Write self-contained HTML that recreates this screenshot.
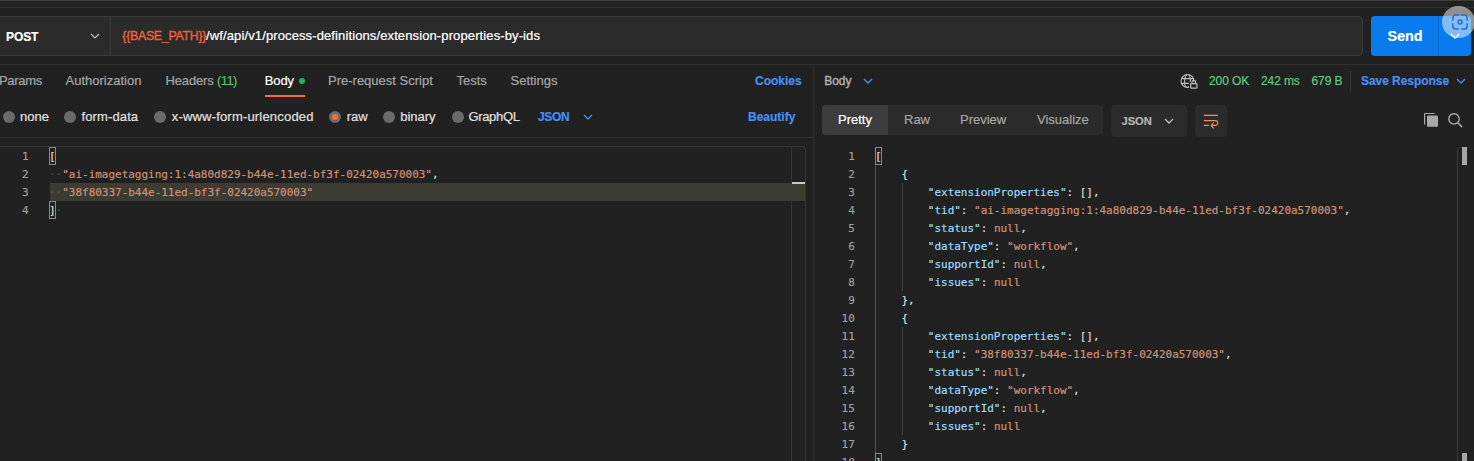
<!DOCTYPE html>
<html><head><meta charset="utf-8">
<style>
*{box-sizing:border-box;margin:0;padding:0}
html,body{width:1474px;height:461px;overflow:hidden;background:#212121;font-family:"Liberation Sans",sans-serif;color:#fff}
.abs{position:absolute}
.t{position:absolute;white-space:nowrap;font-size:13px;line-height:16px;color:#a6a6a6;-webkit-text-stroke:0.2px currentColor}
.hl{position:absolute;left:0;height:1px;background:#303030}
.mono{font-family:"DejaVu Sans Mono","Liberation Mono",monospace;font-size:11px;letter-spacing:-0.02px;-webkit-text-stroke:0.2px currentColor;line-height:18px;white-space:pre;position:absolute}
.ln{position:absolute;font-family:"DejaVu Sans Mono","Liberation Mono",monospace;font-size:11px;line-height:18px;color:#a0a0a0;-webkit-text-stroke:0.15px currentColor;text-align:right;width:30px}
.k{color:#9cdcfe}.s{color:#ce9178}.p{color:#dcdcdc}
.radio{position:absolute;width:12px;height:12px;border-radius:50%;background:#6b6b6b}
</style></head><body>
<div class="abs" style="left:0;top:0;width:1474px;height:1px;background:#3d3d3d"></div>
<div class="hl" style="top:7px;width:1474px"></div>
<!-- URL bar -->
<div class="abs" style="left:-4px;top:16px;width:1367px;height:40px;background:#2b2b2b;border:1px solid #3a3a3a;border-radius:4px"></div>
<div class="abs" style="left:110px;top:17px;width:1px;height:38px;background:#3a3a3a"></div>
<div class="t" style="left:6px;top:28.5px;font-weight:bold;color:#fff;font-size:12px;letter-spacing:-0.1px">POST</div>
<svg class="abs" style="left:89px;top:32px" width="12" height="8" viewBox="0 0 12 8"><path d="M2 2 L6 6 L10 2" fill="none" stroke="#bdbdbd" stroke-width="1.2"/></svg>
<div class="t" style="left:122.3px;top:28px;font-size:13px;color:#fff;letter-spacing:0.115px;-webkit-text-stroke:0.22px #fff"><span style="color:#ec6039;font-size:12.3px;letter-spacing:-0.25px;-webkit-text-stroke:0.4px #ec6039">{{BASE_PATH}}</span>/wf/api/v1/process-definitions/extension-properties-by-ids</div>
<!-- Send -->
<div class="abs" style="left:1371px;top:16px;width:100px;height:40px;background:#097bed;border-radius:4px"></div>
<div class="abs" style="left:1438px;top:16px;width:1px;height:40px;background:#0b6fd8"></div>
<div class="t" style="left:1387.6px;top:27.3px;font-weight:bold;color:#fff;font-size:14.3px;line-height:18px;letter-spacing:-0.05px">Send</div>
<svg class="abs" style="left:1449px;top:32.3px" width="12" height="8" viewBox="0 0 12 8"><path d="M2 2 L6 6 L10 2" fill="none" stroke="#fff" stroke-width="1.4"/></svg>
<!-- floating circle -->
<div class="abs" style="left:1442.4px;top:5.8px;width:32.6px;height:32.6px;border-radius:50%;background:rgba(255,255,255,.5)"></div>
<svg class="abs" style="left:1451.5px;top:14px" width="16" height="16" viewBox="0 0 18 18" fill="none" stroke="#1f6fd1" stroke-width="1.7" stroke-linecap="round"><path d="M1 7V4a3 3 0 0 1 3-3h3M11 1h3a3 3 0 0 1 3 3v3M17 11v3a3 3 0 0 1-3 3h-3M7 17H4a3 3 0 0 1-3-3v-3"/><circle cx="9" cy="9" r="2.3"/></svg>

<div class="hl" style="top:64px;width:1474px"></div>
<!-- vertical divider -->
<div class="abs" style="left:813px;top:65px;width:1px;height:396px;background:#303030"></div>

<!-- request tabs -->
<div class="t" style="left:-1px;top:73px;letter-spacing:-0.3px">Params</div>
<div class="t" style="left:65.5px;top:73px">Authorization</div>
<div class="t" style="left:165.5px;top:73px;letter-spacing:-0.15px">Headers <span style="color:#4fc36d;letter-spacing:-0.6px">(11)</span></div>
<div class="t" style="left:264.7px;top:73px;color:#fff;letter-spacing:-0.1px">Body</div>
<div class="abs" style="left:299px;top:78px;width:6px;height:6px;border-radius:50%;background:#1fb45b"></div>
<div class="abs" style="left:265px;top:95px;width:39.5px;height:2.4px;background:#ff6c37"></div>
<div class="t" style="left:328px;top:73px">Pre-request Script</div>
<div class="t" style="left:456.5px;top:73px">Tests</div>
<div class="t" style="left:510.5px;top:73px">Settings</div>
<div class="t" style="left:755px;top:73.3px;color:#4590ef;font-weight:bold;font-size:12px">Cookies</div>

<!-- radios -->
<div class="radio" style="left:3px;top:111px"></div><div class="t" style="left:20px;top:109px;color:#e0e0e0">none</div>
<div class="radio" style="left:64px;top:111px"></div><div class="t" style="left:81.5px;top:109px;color:#e0e0e0;letter-spacing:0.12px">form-data</div>
<div class="radio" style="left:154px;top:111px"></div><div class="t" style="left:171.7px;top:109px;color:#e0e0e0;letter-spacing:0.19px">x-www-form-urlencoded</div>
<div class="radio" style="left:328.8px;background:#ff6c37;border:3px solid #6b6b6b;width:12.5px;height:12.5px;top:110.7px"></div><div class="t" style="left:346.7px;top:109px;color:#e0e0e0">raw</div>
<div class="radio" style="left:383px;top:111px"></div><div class="t" style="left:400.2px;top:109px;color:#e0e0e0">binary</div>
<div class="radio" style="left:452px;top:111px"></div><div class="t" style="left:468.5px;top:109px;color:#e0e0e0;letter-spacing:-0.35px">GraphQL</div>
<div class="t" style="left:538px;top:109.3px;color:#4590ef;font-weight:bold;font-size:12px;letter-spacing:-0.3px">JSON</div>
<svg class="abs" style="left:582px;top:113px" width="12" height="8" viewBox="0 0 12 8"><path d="M2 2 L6 6 L10 2" fill="none" stroke="#4a90e8" stroke-width="1.3"/></svg>
<div class="t" style="left:748px;top:109.3px;color:#4590ef;font-weight:bold;font-size:12px">Beautify</div>

<div class="hl" style="top:137px;width:813px"></div>
<!-- editor left -->
<div class="abs" style="left:-4px;top:146px;width:810px;height:330px;border:1px solid #353535;border-radius:4px"></div>
<div class="abs" style="left:791px;top:147px;width:1px;height:314px;background:#353535"></div>
<div class="abs" style="left:50px;top:183.2px;width:755px;height:17.6px;background:#3c3c32"></div>
<div class="abs" style="left:48.6px;top:147px;width:7.6px;height:17.5px;border:1px solid #8a8a8a"></div>
<div class="abs" style="left:48.6px;top:201px;width:7.6px;height:17.5px;border:1px solid #8a8a8a"></div>
<div class="abs" style="left:792px;top:182px;width:13px;height:2px;background:#c8c8c8"></div>
<div class="ln" style="left:-1.5px;top:148px">1<br>2<br>3<br>4</div>
<div class="mono p" style="left:49px;top:148px">[
<span style="color:#4a4a4a">··</span><span class="s">"ai-imagetagging:1:4a80d829-b44e-11ed-bf3f-02420a570003"</span>,
<span style="color:#55554a">··</span><span class="s">"38f80337-b44e-11ed-bf3f-02420a570003"</span>
]<span style="color:#4a4a4a">·</span></div>

<!-- response header -->
<div class="t" style="left:824.2px;top:73.4px;font-size:12px;color:#b0b0b0;-webkit-text-stroke:0.4px #b0b0b0">Body</div>
<svg class="abs" style="left:862px;top:77px" width="12" height="8" viewBox="0 0 12 8"><path d="M2 2 L6 6 L10 2" fill="none" stroke="#4a90e8" stroke-width="1.3"/></svg>
<div class="t" style="left:1209px;top:73.4px;font-size:12px;color:#5fcc82;letter-spacing:-0.1px">200 OK</div>
<div class="t" style="left:1261px;top:73.4px;font-size:12px;color:#5fcc82;letter-spacing:-0.1px">242 ms</div>
<div class="t" style="left:1311.5px;top:73.4px;font-size:12px;color:#5fcc82;letter-spacing:-0.1px">679 B</div>
<div class="abs" style="left:1350px;top:71px;width:1px;height:20px;background:#353535"></div>
<div class="t" style="left:1361px;top:73.3px;color:#4590ef;font-weight:bold;font-size:12px;letter-spacing:-0.05px">Save Response</div>
<svg class="abs" style="left:1455px;top:77px" width="12" height="8" viewBox="0 0 12 8"><path d="M2 2 L6 6 L10 2" fill="none" stroke="#4a90e8" stroke-width="1.3"/></svg>

<!-- pretty tabs -->
<div class="abs" style="left:822px;top:105px;width:281px;height:30px;background:#2b2b2b;border-radius:4px"></div>
<div class="abs" style="left:822px;top:105px;width:66px;height:30px;background:#3d3d3d;border-radius:4px 0 0 4px"></div>
<div class="t" style="left:838px;top:112px;color:#fff">Pretty</div>
<div class="t" style="left:904px;top:112px">Raw</div>
<div class="t" style="left:960px;top:112px">Preview</div>
<div class="t" style="left:1037px;top:112px">Visualize</div>
<div class="abs" style="left:1111px;top:105px;width:76px;height:32px;background:#2b2b2b;border-radius:4px"></div>
<div class="t" style="left:1121.5px;top:113.3px;font-size:11.2px;font-weight:bold;color:#b4b4b4;letter-spacing:-0.05px">JSON</div>
<svg class="abs" style="left:1163px;top:117px" width="12" height="8" viewBox="0 0 12 8"><path d="M2 2 L6 6 L10 2" fill="none" stroke="#bdbdbd" stroke-width="1.3"/></svg>
<div class="abs" style="left:1195px;top:105px;width:32px;height:32px;background:#2b2b2b;border-radius:4px"></div>
<svg class="abs" style="left:1200px;top:110px" width="24" height="24" viewBox="0 0 24 24" fill="none" stroke="#f08d5f" stroke-width="1.15"><path d="M3.9 5.4H17.9M3.9 10.6H15.4a2.4 2.4 0 0 1 0 4.8H11.6M3.9 15.4H8.9M13.6 12.6L11.2 15.4L13.6 18.4"/></svg>
<svg class="abs" style="left:1178px;top:71px" width="22" height="20" viewBox="0 0 22 20" fill="none" stroke="#bdbdbd" stroke-width="1.1"><circle cx="9.5" cy="10" r="6.5"/><ellipse cx="9.5" cy="10" rx="2.9" ry="6.5"/><path d="M3.5 7.6H15.5M3.5 12.4H15.5"/><rect x="11" y="11" width="10" height="8" fill="#212121" stroke="none"/><rect x="12.6" y="12.6" width="6.4" height="4.6" rx="0.8" stroke-width="1.2"/><path d="M14 12.6V11a1.8 1.8 0 0 1 3.6 0V12.6" stroke-width="1.1"/></svg>
<svg class="abs" style="left:1422px;top:111px" width="44" height="18" viewBox="0 0 44 18"><rect x="5" y="4.6" width="11" height="11.1" rx="1" fill="#a8a8a8"/><path d="M2.6 13.5V3.4a0.9 0.9 0 0 1 0.9-0.9H12.6" fill="none" stroke="#a8a8a8" stroke-width="1.2"/><circle cx="32" cy="7.9" r="5.2" fill="none" stroke="#a8a8a8" stroke-width="1.4"/><path d="M35.8 11.8L39.6 15.6" stroke="#a8a8a8" stroke-width="1.5" stroke-linecap="round"/></svg>

<!-- response body -->
<div class="ln" style="left:824.8px;top:148px">1<br>2<br>3<br>4<br>5<br>6<br>7<br>8<br>9<br>10<br>11<br>12<br>13<br>14<br>15<br>16<br>17<br>18</div>
<div class="mono p" style="left:875px;top:148px">[
    {
        <span class="k">"extensionProperties"</span>: [],
        <span class="k">"tid"</span>: <span class="s">"ai-imagetagging:1:4a80d829-b44e-11ed-bf3f-02420a570003"</span>,
        <span class="k">"status"</span>: <span class="s">null</span>,
        <span class="k">"dataType"</span>: <span class="s">"workflow"</span>,
        <span class="k">"supportId"</span>: <span class="s">null</span>,
        <span class="k">"issues"</span>: <span class="s">null</span>
    },
    {
        <span class="k">"extensionProperties"</span>: [],
        <span class="k">"tid"</span>: <span class="s">"38f80337-b44e-11ed-bf3f-02420a570003"</span>,
        <span class="k">"status"</span>: <span class="s">null</span>,
        <span class="k">"dataType"</span>: <span class="s">"workflow"</span>,
        <span class="k">"supportId"</span>: <span class="s">null</span>,
        <span class="k">"issues"</span>: <span class="s">null</span>
    }
]</div>
<div class="abs" style="left:1457px;top:147px;width:1px;height:314px;background:#3c3c3c"></div>
<div class="abs" style="left:1457px;top:147px;width:13px;height:1px;background:#2c2c2c"></div>
<div class="abs" style="left:1462px;top:147px;width:5px;height:18.2px;background:#a6a6a6"></div>
<div class="abs" style="left:1462px;top:452.5px;width:5px;height:9px;background:#a6a6a6"></div>
<div class="abs" style="left:875px;top:164px;width:1px;height:290px;background:#505050"></div>
<div class="abs" style="left:901.5px;top:183px;width:1px;height:108px;background:#404040"></div>
<div class="abs" style="left:901.5px;top:327px;width:1px;height:108px;background:#404040"></div>
<div class="abs" style="left:874.6px;top:147px;width:7.6px;height:17.5px;border:1px solid #8a8a8a"></div>
<div class="abs" style="left:874.6px;top:453px;width:7.6px;height:17.5px;border:1px solid #8a8a8a"></div>
</body></html>
